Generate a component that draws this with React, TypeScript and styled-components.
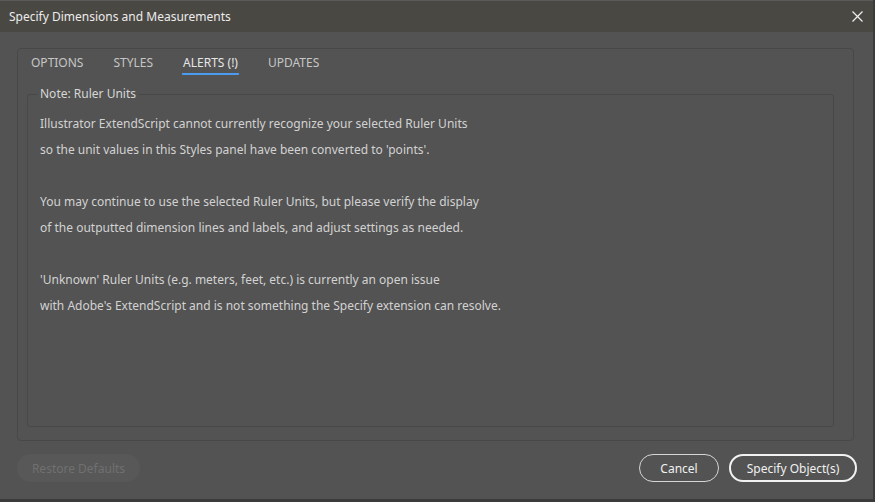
import React from "react";
import styled, { createGlobalStyle } from "styled-components";

const Global = createGlobalStyle`
  html, body { margin: 0; padding: 0; background: #3b3b3b; }
  body { font-family: "Noto Sans", "Open Sans", sans-serif; }
  * { box-sizing: border-box; }
`;

const Window = styled.div`
  width: 873px;
  height: 499px;
  background: #535353;
  display: flex;
  flex-direction: column;
  border-top: 1px solid #5a5a5a;
`;

const TitleBar = styled.div`
  height: 31px;
  background: #4a4843;
  display: flex;
  align-items: center;
  justify-content: space-between;
  padding: 0 10px 0 9px;
`;

const Title = styled.div`
  color: #ececec;
  font-size: 12px;
`;

const CloseBtn = styled.div`
  width: 12px;
  height: 12px;
  display: flex;
  align-items: center;
  justify-content: center;
`;

const Body = styled.div`
  flex: 1;
  display: flex;
  flex-direction: column;
  padding: 16px 16px 17px 17px;
`;

const Panel = styled.div`
  height: 393px;
  margin-right: 3px;
  border: 1px solid #484848;
  border-radius: 4px;
  display: flex;
  flex-direction: column;
  padding: 0 19px 13px 9px;
`;

const Tabs = styled.div`
  display: flex;
  gap: 28px;
  height: 38px;
  padding-left: 3px;
  padding-top: 6px;
`;

const Tab = styled.div<{ $active?: boolean }>`
  font-size: 12px;
  color: ${(p) => (p.$active ? "#e6e6e6" : "#c6c6c6")};
  height: 20px;
  line-height: 16px;
  border-bottom: 2px solid ${(p) => (p.$active ? "#4b9bf0" : "transparent")};
  border-radius: 1px;
  padding: 0 1px;
`;

const Fieldset = styled.fieldset`
  flex: 1;
  margin: 0;
  border: 1px solid #484848;
  border-radius: 3px;
  padding: 10px 12px 0 12px;
  min-width: 0;
`;

const Legend = styled.legend`
  color: #d6d6d6;
  font-size: 12px;
  padding: 0 3px;
  margin-left: -3px;
  line-height: 14px;
`;

const Line = styled.p<{ $gap?: boolean }>`
  margin: 0;
  margin-top: ${(p) => (p.$gap ? "26px" : "0")};
  color: #d2d2d2;
  font-size: 12px;
  line-height: 26px;
  white-space: nowrap;
`;

const Footer = styled.div`
  display: flex;
  align-items: center;
  margin-top: 13px;
  gap: 10px;
`;

const Spacer = styled.div`
  flex: 1;
`;

const Pill = styled.button<{ $variant: "disabled" | "secondary" | "primary" }>`
  height: 28px;
  border-radius: 14px;
  font-family: inherit;
  font-size: 12px;
  padding: 0;
  cursor: default;
  background: ${(p) => (p.$variant === "disabled" ? "#585858" : "transparent")};
  color: ${(p) => (p.$variant === "disabled" ? "#707070" : "#f0f0f0")};
  border: ${(p) =>
    p.$variant === "disabled"
      ? "none"
      : p.$variant === "primary"
      ? "2px solid #f2f2f2"
      : "1px solid #d6d6d6"};
`;

const tabs = [
  { label: "OPTIONS" },
  { label: "STYLES" },
  { label: "ALERTS (!)", active: true },
  { label: "UPDATES" },
];

export default function App() {
  return (
    <>
      <Global />
      <Window>
        <TitleBar>
          <Title>Specify Dimensions and Measurements</Title>
          <CloseBtn>
            <svg width="11" height="11" viewBox="0 0 11 11">
              <path d="M0.5 0.5 L10.5 10.5 M10.5 0.5 L0.5 10.5" stroke="#f0f0f0" strokeWidth="1.2" />
            </svg>
          </CloseBtn>
        </TitleBar>
        <Body>
          <Panel>
            <Tabs>
              {tabs.map((t) => (
                <Tab key={t.label} $active={t.active}>
                  {t.label}
                </Tab>
              ))}
            </Tabs>
            <Fieldset>
              <Legend>Note: Ruler Units</Legend>
              <Line>Illustrator ExtendScript cannot currently recognize your selected Ruler Units</Line>
              <Line>so the unit values in this Styles panel have been converted to 'points'.</Line>
              <Line $gap>You may continue to use the selected Ruler Units, but please verify the display</Line>
              <Line>of the outputted dimension lines and labels, and adjust settings as needed.</Line>
              <Line $gap>'Unknown' Ruler Units (e.g. meters, feet, etc.) is currently an open issue</Line>
              <Line>with Adobe's ExtendScript and is not something the Specify extension can resolve.</Line>
            </Fieldset>
          </Panel>
          <Footer>
            <Pill $variant="disabled" style={{ width: 123 }}>Restore Defaults</Pill>
            <Spacer />
            <Pill $variant="secondary" style={{ width: 80 }}>Cancel</Pill>
            <Pill $variant="primary" style={{ width: 128 }}>Specify Object(s)</Pill>
          </Footer>
        </Body>
      </Window>
    </>
  );
}
